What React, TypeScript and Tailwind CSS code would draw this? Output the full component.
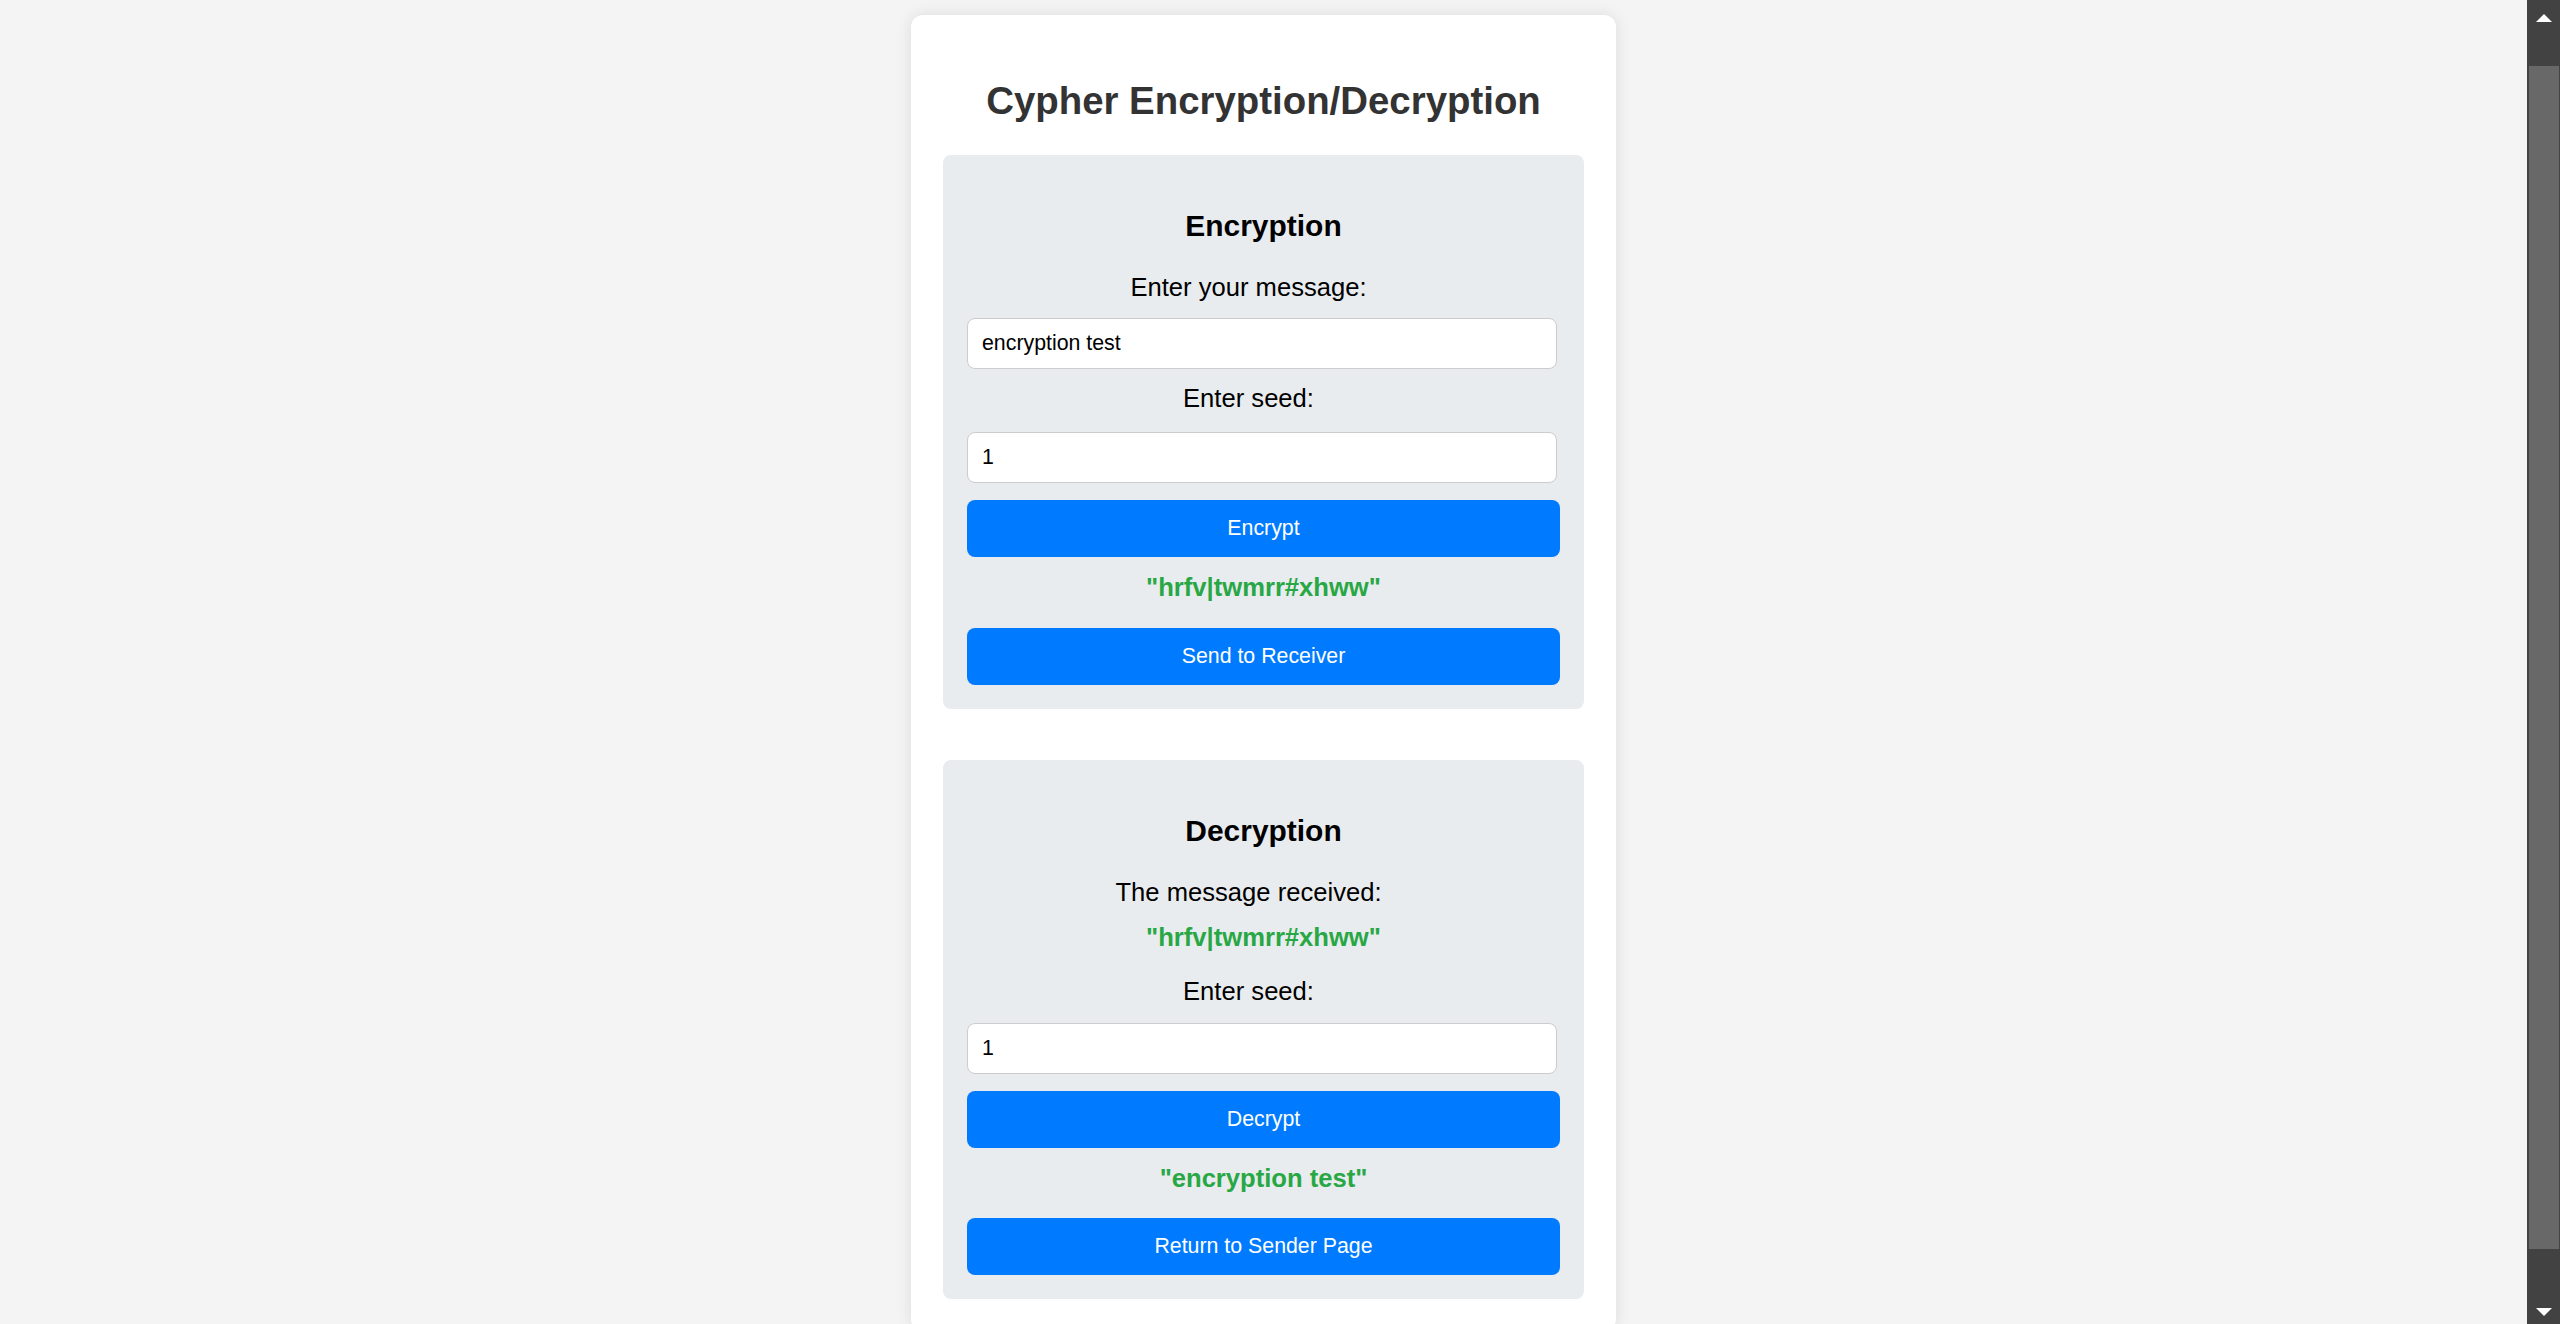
import { useLayoutEffect, useRef, useState } from 'react';

// alternating shift: seed+2 on even positions, seed+3 on odd ones
function shiftText(text: string, seed: number, dir: 1 | -1) {
    return text
        .split('')
        .map((ch, i) => {
            const shift = i % 2 === 0 ? seed + 2 : seed + 3;
            return String.fromCharCode(ch.charCodeAt(0) + dir * shift);
        })
        .join('');
}

function ScrollBar() {
    return (
        <aside className="flex h-full w-[33px] shrink-0 flex-col bg-[#424242]">
            <div className="flex h-[36px] justify-center pt-[14px]">
                <svg width="16" height="8" viewBox="0 0 16 8">
                    <path d="M8 0 L16 8 L0 8 Z" fill="#fff" />
                </svg>
            </div>
            <div className="flex flex-1 flex-col pt-[30px] pb-[39px] pl-[2px] pr-[1px]">
                <div className="flex-1 bg-[#686868]" />
            </div>
            <div className="flex h-[36px] justify-center pt-[20px]">
                <svg width="16" height="8" viewBox="0 0 16 8">
                    <path d="M0 0 L16 0 L8 8 Z" fill="#fff" />
                </svg>
            </div>
        </aside>
    );
}

export default function App() {
    const ref = useRef<HTMLDivElement>(null);
    const [message, setMessage] = useState('encryption test');
    const [seed, setSeed] = useState('1');
    const [encrypted, setEncrypted] = useState('hrfv|twmrr#xhww');
    const [received, setReceived] = useState('hrfv|twmrr#xhww');
    const [seed2, setSeed2] = useState('1');
    const [decrypted, setDecrypted] = useState('encryption test');

    useLayoutEffect(() => {
        if (ref.current) ref.current.scrollTop = 33;
    }, []);

    return (
        <div className="flex h-screen overflow-hidden bg-[#f4f4f4] font-['Liberation_Sans',Arial,sans-serif] text-black">
            <div
                ref={ref}
                className="h-full flex-1 overflow-y-auto [scrollbar-width:none]"
            >
                <div className="pt-[48px] pb-[37px]">
                    <div className="mx-auto flex w-[705px] flex-col rounded-[12px] bg-white px-[32px] pt-[64px] pb-[32px] shadow-[0_0_16px_rgba(0,0,0,0.1)]">
                        <h1 className="text-center text-[38.4px] leading-[44px] font-bold text-[#333]">
                            Cypher Encryption/Decryption
                        </h1>

                        <section className="mt-[32px] flex flex-col rounded-[8px] bg-[#e9ecef] px-[24px] pt-[53px] pb-[24px] text-center">
                            <h3 className="text-[29.95px] leading-[35px] font-bold">
                                Encryption
                            </h3>
                            <label className="mt-[29px] pr-[30px] text-[25.6px] leading-[30px]">
                                Enter your message:
                            </label>
                            <input
                                className="mt-[16px] h-[51px] w-[calc(100%-3px)] rounded-[8px] border border-[#ccc] bg-white px-[14px] text-left text-[21.33px] outline-none"
                                value={message}
                                onChange={(e) => setMessage(e.target.value)}
                            />
                            <label className="mt-[14px] pr-[30px] text-[25.6px] leading-[30px]">
                                Enter seed:
                            </label>
                            <input
                                className="mt-[19px] h-[51px] w-[calc(100%-3px)] rounded-[8px] border border-[#ccc] bg-white px-[14px] text-left text-[21.33px] outline-none"
                                value={seed}
                                onChange={(e) => setSeed(e.target.value)}
                            />
                            <button
                                className="mt-[17px] h-[57px] w-full cursor-pointer rounded-[8px] bg-[#007bff] text-[21.33px] text-white"
                                onClick={() =>
                                    setEncrypted(shiftText(message, Number(seed) || 0, 1))
                                }
                            >
                                Encrypt
                            </button>
                            <p className="mt-[15px] text-[25.6px] leading-[30px] font-bold text-[#28a745]">
                                "{encrypted}"
                            </p>
                            <button
                                className="mt-[26px] h-[57px] w-full cursor-pointer rounded-[8px] bg-[#007bff] text-[21.33px] text-white"
                                onClick={() => setReceived(encrypted)}
                            >
                                Send to Receiver
                            </button>
                        </section>

                        <section className="mt-[51px] flex flex-col rounded-[8px] bg-[#e9ecef] px-[24px] pt-[53px] pb-[24px] text-center">
                            <h3 className="text-[29.95px] leading-[35px] font-bold">
                                Decryption
                            </h3>
                            <p className="mt-[29px] pr-[30px] text-[25.6px] leading-[30px]">
                                The message received:
                            </p>
                            <p className="mt-[15px] text-[25.6px] leading-[30px] font-bold text-[#28a745]">
                                "{received}"
                            </p>
                            <label className="mt-[24px] pr-[30px] text-[25.6px] leading-[30px]">
                                Enter seed:
                            </label>
                            <input
                                className="mt-[17px] h-[51px] w-[calc(100%-3px)] rounded-[8px] border border-[#ccc] bg-white px-[14px] text-left text-[21.33px] outline-none"
                                value={seed2}
                                onChange={(e) => setSeed2(e.target.value)}
                            />
                            <button
                                className="mt-[17px] h-[57px] w-full cursor-pointer rounded-[8px] bg-[#007bff] text-[21.33px] text-white"
                                onClick={() =>
                                    setDecrypted(shiftText(received, Number(seed2) || 0, -1))
                                }
                            >
                                Decrypt
                            </button>
                            <p className="mt-[15px] text-[25.6px] leading-[30px] font-bold text-[#28a745]">
                                "{decrypted}"
                            </p>
                            <button
                                className="mt-[25px] h-[57px] w-full cursor-pointer rounded-[8px] bg-[#007bff] text-[21.33px] text-white"
                                onClick={() => ref.current?.scrollTo({ top: 0 })}
                            >
                                Return to Sender Page
                            </button>
                        </section>
                    </div>
                </div>
            </div>
            <ScrollBar />
        </div>
    );
}
